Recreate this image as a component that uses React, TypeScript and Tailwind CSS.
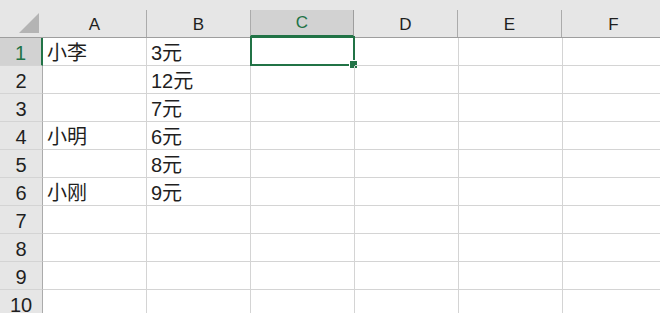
const cols = ["A", "B", "C", "D", "E", "F"];

const data: Record<number, { a?: string; b?: string }> = {
  1: { a: "小李", b: "3元" },
  2: { b: "12元" },
  3: { b: "7元" },
  4: { a: "小明", b: "6元" },
  5: { b: "8元" },
  6: { a: "小刚", b: "9元" },
};

const rows = [1, 2, 3, 4, 5, 6, 7, 8, 9, 10];

const font = "font-['Liberation_Sans','Noto_Sans_CJK_SC',sans-serif]";

export default function App() {
  return (
    <div className={`h-[313px] w-[660px] overflow-hidden bg-white text-[#1f1f1f] ${font}`}>
      {/* column headers */}
      <div className="flex h-[38px] w-max border-b border-[#9e9e9e] bg-[#e6e6e6]">
        <div className="relative w-[43px] shrink-0">
          <svg className="absolute left-[19px] top-[13px]" width="20" height="20" viewBox="0 0 20 20">
            <polygon points="20,0 20,20 0,20" fill="#b4b4b4" />
          </svg>
        </div>
        {cols.map((c) => (
          <div
            key={c}
            className={`mt-[10px] flex h-[27px] w-[104px] shrink-0 items-end justify-center border-r pb-[4px] text-[17px] leading-none ${
              c === "C"
                ? "border-[#9e9e9e] border-b-2 border-b-[#217346] bg-[#d2d2d2] pb-[2px] text-[#217346]"
                : "border-[#ababab]"
            }`}
            style={c === "C" ? { borderLeft: "1px solid #ababab", marginLeft: -1 } : undefined}
          >
            {c}
          </div>
        ))}
      </div>

      {rows.map((r) => (
        <div key={r} className="flex h-[28px] w-max">
          <div
            className={`flex w-[43px] shrink-0 items-end justify-center border-b pb-[2px] text-[20px] leading-none ${
              r === 1
                ? "border-r-2 border-[#d4d4d4] border-r-[#217346] bg-[#d2d2d2] text-[#217346]"
                : "border-r border-[#d4d4d4] border-r-[#ababab] bg-[#e6e6e6]"
            }`}
          >
            {r}
          </div>
          {cols.map((c) => (
            <div
              key={c}
              className="relative flex w-[104px] shrink-0 items-end border-b border-r border-[#d4d4d4] pb-[2px] pl-[4px] text-[20px] leading-none"
            >
              {c === "A" && data[r]?.a}
              {c === "B" && data[r]?.b}
              {c === "C" && r === 1 && (
                <>
                  <div className="absolute -left-[1px] -top-[2px] h-[30px] w-[105px] border-2 border-[#217346]" />
                  <div className="absolute left-[98px] top-[22px] h-[9px] w-[9px] border border-white bg-[#217346]" />
                </>
              )}
            </div>
          ))}
        </div>
      ))}
    </div>
  );
}
